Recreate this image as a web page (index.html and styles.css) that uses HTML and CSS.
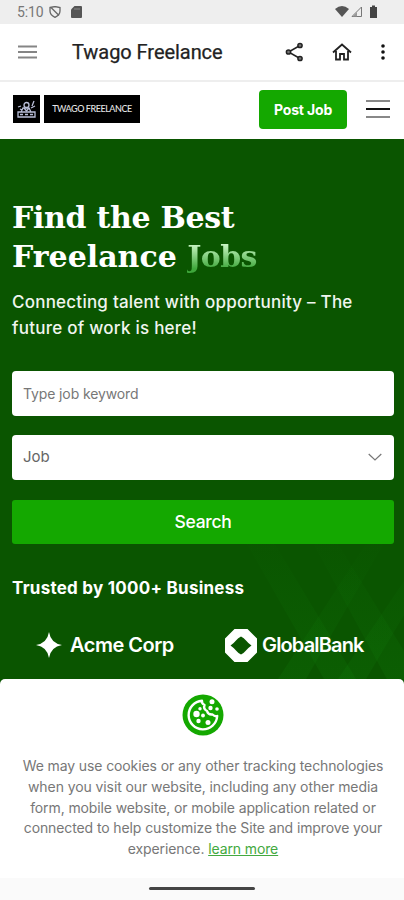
FILE: index.html
```html
<!DOCTYPE html>
<html lang="en">
<head>
<meta charset="utf-8">
<title>Twago Freelance</title>
<link rel="stylesheet" href="styles.css">
</head>
<body>
<div class="status">
  <span class="time">5:10</span>
  <svg class="s-vpn" width="12" height="12" viewBox="0 0 12 12" fill="none" stroke="#666" stroke-width="1.3"><path d="M1 1.5l5-1 5 1v3.5c0 3-2 5-5 6.300-3-1.300-5-3.300-5-6.300zM2 1.500l8 8"/></svg>
  <svg class="s-sd" width="11" height="12" viewBox="0 0 11 12"><path d="M3.500 0H10q1 0 1 1v10q0 1-1 1H1q-1 0-1-1V3.500z" fill="#555"/><path d="M4 2v2M6 2v2M8 2v2" stroke="#999" stroke-width=".8"/></svg>
  <svg class="s-right" width="44" height="14" viewBox="0 0 44 14"><path d="M0 4Q7-2 14 4L7 12z" fill="#555"/><path d="M26.500 2v9.500H17z" fill="none" stroke="#777"/><path d="M22 7v4.500h-4.500z" fill="#999"/><path d="M35 2h2V.5h3V2h2v11h-7z" fill="#444"/></svg>
</div>
<header class="appbar">
  <svg class="menu" width="20" height="14" viewBox="0 0 20 14"><path d="M0 1.500h19M0 7h19M0 12.500h19" stroke="#858585" stroke-width="2.200"/></svg>
  <h2 class="title">Twago Freelance</h2>
  <svg class="share" width="19" height="20" viewBox="0 0 19 20"><path d="M15 3.500L3.500 10 15 16.500" fill="none" stroke="#222" stroke-width="1.500"/><g stroke="#222" stroke-width="1.500" fill="#777"><circle cx="3.500" cy="10" r="2.100"/><circle cx="15" cy="3.500" r="2.100"/><circle cx="15" cy="16.500" r="2.100"/></g></svg>
  <svg class="home" width="20" height="18" viewBox="0 0 20 18" fill="none" stroke="#222" stroke-width="1.800"><path d="M1 9.500L10 1.500l9 8M4 8v8.500h4V11h4v5.500h4V8"/></svg>
  <svg class="dots" width="4" height="16" viewBox="0 0 4 16" fill="#111"><circle cx="2" cy="2" r="1.800"/><circle cx="2" cy="8" r="1.800"/><circle cx="2" cy="14" r="1.800"/></svg>
</header>
<nav class="sitebar">
  <span class="mark"><svg width="19" height="18" viewBox="0 0 19 18" fill="none" stroke="#b9bed8" stroke-width="1.300"><path d="M1 17v-5h17v5zM4 12l2-4h6l2 4M3 14.500h3M8 14.500h3M13 14.500h3M1 7l3-1M15 6l2-5M14 8l4-2M3 9l2 1"/><circle cx="9.500" cy="5" r="2.500"/><path d="M7 8l2.500 3L12 8"/></svg></span>
  <span class="brand">TWAGO FREELANCE</span>
  <a class="post">Post Job</a>
  <svg class="burger" width="24" height="20" viewBox="0 0 24 20"><path d="M0 2h24M0 18h24" stroke="#888" stroke-width="2"/><path d="M0 10h24" stroke="#111" stroke-width="2"/></svg>
</nav>
<main class="hero">
  <svg class="pattern" width="160" height="160" viewBox="0 0 160 160"><defs><linearGradient id="fade" gradientUnits="userSpaceOnUse" x1="0" y1="10" x2="0" y2="160"><stop offset="0" stop-color="#139010" stop-opacity="0"/><stop offset="1" stop-color="#139010" stop-opacity=".15"/></linearGradient></defs><g fill="url(#fade)"><path d="M0 20h28l84 140H80z"/><path d="M64 15h24l80 130v30h-17z"/><path d="M138 0h16L62 160H34z"/><path d="M160 62v34l-38 64H94z"/></g></svg>
  <div class="inner">
    <h1><span class="l1">Find the Best</span><br><span class="l2">Freelance</span> <span class="jobs">Jobs</span></h1>
    <p class="lead"><span class="lead1">Connecting talent with opportunity – The</span><br><span class="lead2">future of work is here!</span></p>
    <div class="field keyword"><span>Type job keyword</span></div>
    <div class="field select"><span>Job</span><svg width="14" height="8" viewBox="0 0 14 8" fill="none" stroke="#777" stroke-width="1.200"><path d="M.7 1L7 7l6.300-6"/></svg></div>
    <div class="search"><span>Search</span></div>
    <h3>Trusted by 1000+ Business</h3>
    <div class="logos">
      <svg class="star" width="26" height="26" viewBox="0 0 26 26"><path d="M13 0Q14.800 11.200 26 13 14.800 14.800 13 26 11.200 14.800 0 13 11.200 11.200 13 0z" fill="#fff"/><path d="M13 5l3 5 5 3-5 3-3 5-3-5-5-3 5-3z" fill="#fff"/></svg>
      <span class="acme">Acme Corp</span>
      <svg class="gem" width="32" height="33" viewBox="0 0 32 33"><path fill="#fff" fill-rule="evenodd" d="M9.500 0h13L32 9.500v14L22.500 33h-13L0 23.500v-14zM16 7.500Q13 9 11 11.500 9 14 5.500 16.500 9 19 11 21.500 13 24 16 25.500 19 24 21 21.500 23 19 26.500 16.500 23 14 21 11.500 19 9 16 7.500z"/></svg>
      <span class="bank">GlobalBank</span>
    </div>
  </div>
</main>
<div class="cookiewrap"><section class="cookie">
  <svg width="42" height="42" viewBox="0 0 42 42"><circle cx="21" cy="21" r="20.500" fill="#14a800"/><path d="M20 6.800A14.300 14.300 0 1 0 35.200 22Q33 23 30.500 20.500 26 21 25 17 21 15 22.500 11 19.500 9.500 20 6.800z" fill="none" stroke="#fff" stroke-width="2.400" stroke-linejoin="round"/><g fill="#fff"><circle cx="14.500" cy="20" r="3.200"/><circle cx="18" cy="14.800" r="1.700"/><circle cx="21" cy="21.500" r="1.900"/><circle cx="16.500" cy="27" r="2.200"/><circle cx="26" cy="28.500" r="2.500"/><circle cx="30" cy="7.800" r="2.500"/><circle cx="28.500" cy="14" r="2.200"/><circle cx="35" cy="15" r="1.800"/></g></svg>
  <p><span class="c1">We may use cookies or any other tracking technologies</span><br><span class="c2">when you visit our website, including any other media</span><br><span class="c3">form, mobile website, or mobile application related or</span><br><span class="c4">connected to help customize the Site and improve your</span><br><span class="c5">experience. <a>learn more</a></span></p>
</section></div>
<footer class="gesture"><i></i></footer>
</body>
</html>
```
FILE: styles.css
```css
* { box-sizing: border-box; }
body { margin: 0; width: 404px; height: 900px; overflow: hidden; background: #fff; font-family: Inter, sans-serif; }
svg { display: block; flex: none; }
span, a { white-space: nowrap; }
h1, h2, h3, p { margin: 0; }

.status { height: 24px; background: #eee; display: flex; align-items: center; padding: 0 25px 0 17px; }
.time { font: 14px/24px Roboto, sans-serif; color: #777; width: 32px; letter-spacing: -.1px; }
.s-sd { margin-left: 10px; }
.s-right { margin-left: auto; }

.appbar { height: 56px; display: flex; align-items: center; padding: 0 19px 0 18px; }
.title { font: 400 20px/57px Roboto, sans-serif; color: #222; margin-left: 34px; letter-spacing: -.05px; -webkit-text-stroke: .25px #222; }
.share { margin-left: auto; }
.home { margin-left: 28px; }
.dots { margin-left: 29px; }

.sitebar { height: 59px; display: flex; align-items: center; padding: 0 14px 3px 13px; border-top: 2px solid #eee; }
.mark, .brand { height: 28px; background: #000; display: flex; align-items: center; justify-content: center; }
.mark { width: 27px; }
.brand { width: 96px; margin-left: 4px; color: #e4e4e4; font: 500 9px/28px Lato, sans-serif; letter-spacing: -.45px; }
.post { margin-left: auto; width: 88px; height: 39px; border-radius: 4px; background: #14a800; color: #fff; text-align: center; font: 700 14px/39px Inter, sans-serif; letter-spacing: -.15px; }
.burger { margin-left: 19px; }

.hero { height: 540px; background: #0a5500; position: relative; color: #fff; }
.pattern { position: absolute; right: 0; bottom: 0; }
.inner { position: relative; padding: 59px 10px 0 12px; }
h1 { font: 700 30px/39px "DejaVu Serif", serif; height: 78px; }
.l1 { letter-spacing: -.3px; }
.l2 { letter-spacing: 0; }
.jobs { letter-spacing: -.6px; color: transparent; background: linear-gradient(#c9f5c4 15%, #3fa83b 85%); -webkit-background-clip: text; background-clip: text; }
.lead { margin-top: 13px; font-size: 17px; line-height: 26px; height: 52px; color: #f0f5ef; letter-spacing: .23px; font-weight: 500; }
.lead2 { letter-spacing: .25px; }
.field { height: 45px; border-radius: 4px; background: #fff; display: flex; align-items: center; justify-content: space-between; padding: 0 12px 0 11px; color: #777; }
.keyword { margin-top: 30px; font-size: 14px; letter-spacing: -.12px; }
.select { margin-top: 19px; font-size: 15px; padding-bottom: 2px; color: #666; }
.search { margin-top: 20px; height: 44px; border-radius: 3px; background: #14a800; text-align: center; font-size: 17.500px; font-weight: 500; line-height: 43px; letter-spacing: -.3px; }
h3 { margin-top: 32px; font-size: 17px; line-height: 24px; font-weight: 700; letter-spacing: .25px; }
.logos { height: 34px; margin-top: 28px; display: flex; align-items: center; padding-left: 24px; }
.acme, .bank { font-weight: 600; font-size: 20px; line-height: 34px; letter-spacing: -.5px; }
.acme { width: 112px; margin-left: 8px; }
.gem { margin-left: 43px; }
.bank { margin-left: 5px; letter-spacing: -.85px; }

.cookiewrap { background: #0a5500; height: 199px; }
.cookie { height: 199px; background: #fff; border-radius: 5px 5px 0 0; padding-top: 15px; padding-left: 2px; display: flex; flex-direction: column; align-items: center; }
.cookie p { margin-top: 20px; font-size: 14px; line-height: 20.800px; color: #777; text-align: center; letter-spacing: -.11px; }
.cookie .c2 { letter-spacing: -.09px; }
.cookie a { color: #43a940; text-decoration: underline; }
.gesture { height: 22px; background: #fafafa; display: flex; justify-content: center; padding-top: 9px; }
.gesture i { width: 106px; height: 3px; border-radius: 2px; background: #444; }
```
